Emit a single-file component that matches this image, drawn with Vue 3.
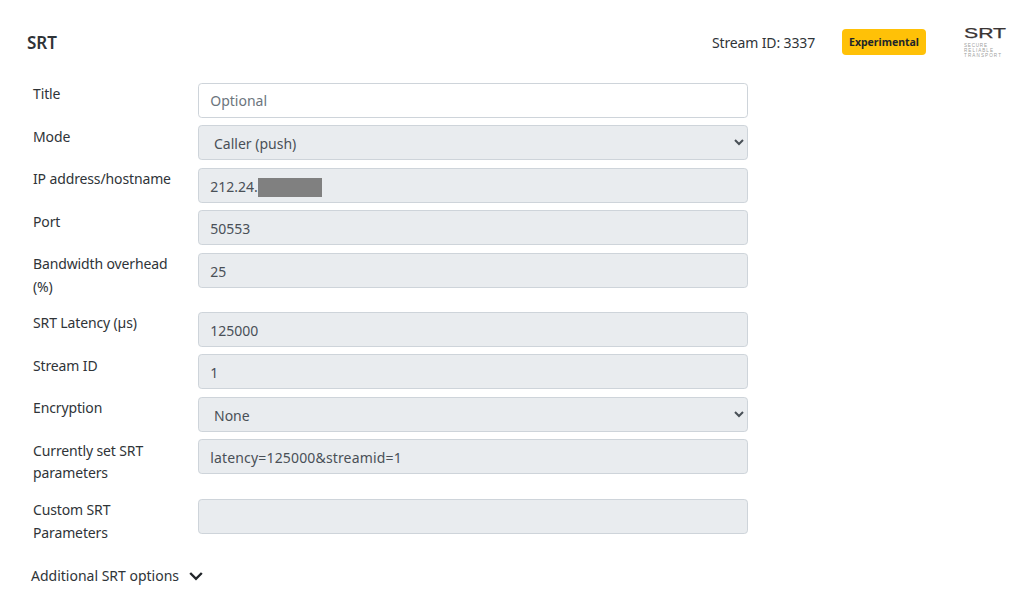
<script setup>
const fields = [
  { label: 'Title', placeholder: 'Optional', editable: true },
  { label: 'Mode', options: 'Caller (push)' },
  { label: 'IP address/hostname', value: '212.24.', masked: true },
  { label: 'Port', value: '50553' },
  { label: 'Bandwidth overhead (%)', value: '25' },
  { label: 'SRT Latency (µs)', value: '125000' },
  { label: 'Stream ID', value: '1' },
  { label: 'Encryption', options: 'None' },
  { label: 'Currently set SRT parameters', value: 'latency=125000&streamid=1', wide: true },
  { label: 'Custom SRT Parameters', value: '' }
]
</script>

<template>
  <div class="page">
    <header class="head">
      <h1 class="title">SRT</h1>
      <span class="stream-id">Stream ID: 3337</span>
      <span class="badge">Experimental</span>
      <div class="logo">
        <svg width="42" height="30" viewBox="0 0 42 30">
          <text x="0" y="11" class="logo-big" textLength="42" lengthAdjust="spacingAndGlyphs">SRT</text>
          <text x="0" y="20" class="logo-small" textLength="23" lengthAdjust="spacing">SECURE</text>
          <text x="0" y="25" class="logo-small" textLength="29" lengthAdjust="spacing">RELIABLE</text>
          <text x="0" y="30" class="logo-small" textLength="37" lengthAdjust="spacing">TRANSPORT</text>
        </svg>
      </div>
    </header>

    <form class="form" @submit.prevent>
      <div v-for="field in fields" :key="field.label" class="row">
        <label class="label">{{ field.label }}</label>
        <div class="control">
          <select v-if="field.options" class="input select" disabled>
            <option>{{ field.options }}</option>
          </select>
          <input
            v-else
            class="input"
            :readonly="!field.editable"
            :class="{ editable: field.editable, wide: field.wide }"
            :placeholder="field.placeholder"
            :value="field.value"
          />
          <span v-if="field.masked" class="mask"></span>
        </div>
      </div>
    </form>

    <div class="more">
      <span>Additional SRT options</span>
      <svg width="14" height="10" viewBox="0 0 14 10">
        <path d="M1.2 2 L7 7.8 L12.8 2" fill="none" stroke="#212529" stroke-width="2.4" />
      </svg>
    </div>
  </div>
</template>

<style scoped>
.page {
  width: 1028px;
  height: 611px;
  overflow: hidden;
  background: #fff;
  font-family: "Noto Sans", "Open Sans", sans-serif;
  font-size: 14px;
  line-height: 22.5px;
  color: #2f3438;
}

.head {
  display: flex;
  align-items: center;
  height: 26px;
  padding: 29px 22px 0 27px;
  margin-bottom: 27.9px;
}

.title {
  margin: 0 auto 0 0;
  padding-top: 2px;
  font-size: 17px;
  font-weight: 600;
  line-height: 26px;
}

.stream-id {
  margin-right: 27px;
  padding-top: 2px;
  letter-spacing: -0.14px;
}

.badge {
  width: 84px;
  height: 26px;
  margin-right: 38px;
  background: #ffc107;
  border-radius: 4px;
  color: #212529;
  font-size: 10.5px;
  font-weight: 700;
  line-height: 27px;
  text-align: center;
}

.logo {
  width: 42px;
  height: 30px;
}

.logo svg {
  display: block;
  overflow: visible;
}

.logo-big {
  font-family: "Liberation Sans", sans-serif;
  font-size: 14px;
  fill: #3a3535;
  stroke: #3a3535;
  stroke-width: 0.25px;
}

.logo-small {
  font-family: "Liberation Sans", sans-serif;
  font-size: 4.6px;
  fill: #a0a0a0;
}

.form {
  width: 748px;
  padding-left: 33px;
  box-sizing: border-box;
}

.row {
  display: flex;
  align-items: flex-start;
  margin-bottom: 7.5px;
}

.row:last-child {
  padding-top: 0.4px;
}

.label {
  flex: 0 0 165px;
  padding: 0.4px 15px 0 0;
  box-sizing: border-box;
  margin-bottom: 6.17px;
  letter-spacing: -0.13px;
}

.control {
  position: relative;
  flex: 0 0 550px;
}

.input {
  display: block;
  width: 100%;
  height: 35px;
  box-sizing: border-box;
  padding: 5.7px 11.25px 4.3px;
  background: #e9ecef;
  border: 1px solid #ced4da;
  border-radius: 3.75px;
  color: #495057;
  font: inherit;
  outline: none;
  opacity: 1;
}

.input.editable {
  padding: 5px 11.25px;
  background: #fff;
}

.input.wide {
  letter-spacing: 0.16px;
}

.input::placeholder {
  color: #6c757d;
  opacity: 1;
}

.select {
  padding-left: 11px;
}

.mask {
  position: absolute;
  left: 60px;
  top: 10px;
  width: 64px;
  height: 19px;
  background: #808080;
}

.more {
  display: flex;
  align-items: center;
  gap: 10px;
  margin: 14.3px 0 0 31px;
}
</style>
